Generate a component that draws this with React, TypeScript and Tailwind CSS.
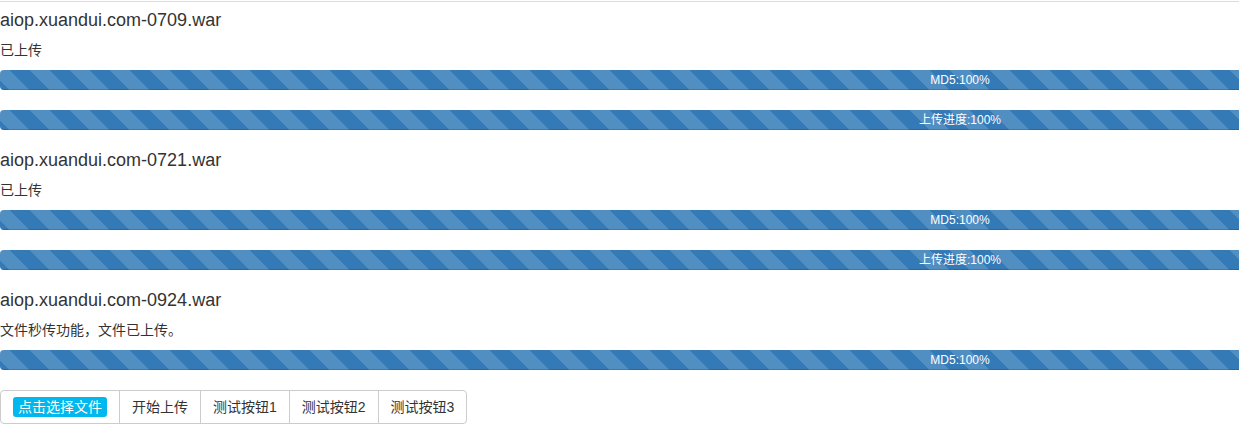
import React from 'react';

interface UploadItem {
  name: string;
  status: string;
  bars: string[];
}

const items: UploadItem[] = [
  { name: 'aiop.xuandui.com-0709.war', status: '已上传', bars: ['MD5:100%', '上传进度:100%'] },
  { name: 'aiop.xuandui.com-0721.war', status: '已上传', bars: ['MD5:100%', '上传进度:100%'] },
  { name: 'aiop.xuandui.com-0924.war', status: '文件秒传功能，文件已上传。', bars: ['MD5:100%'] },
];

const buttons = ['开始上传', '测试按钮1', '测试按钮2', '测试按钮3'];

// 条纹进度条（Bootstrap 3 风格）
const StripedBar: React.FC<{ label: string }> = ({ label }) => (
  <div className="mb-5 h-5 overflow-hidden rounded bg-[#f5f5f5]">
    <div className="h-5 w-full bg-[#337ab7] bg-[linear-gradient(45deg,rgba(255,255,255,.15)_25%,transparent_25%,transparent_50%,rgba(255,255,255,.15)_50%,rgba(255,255,255,.15)_75%,transparent_75%,transparent)] bg-[length:40px_40px] bg-[position:30px_0] text-center text-xs leading-5 text-white shadow-[inset_0_-1px_0_rgba(0,0,0,.15)]">
      {label}
    </div>
  </div>
);

export default function App() {
  return (
    <div
      className="h-[448px] w-full overflow-hidden bg-white text-[#333]"
      style={{ fontFamily: '"Liberation Sans", "Noto Sans CJK SC", sans-serif' }}
    >
      {/* 顶部分隔线 */}
      <div className="mt-px border-t border-[#ddd]" />

      <div className="w-[1920px] pt-2">
        {items.map((item) => (
          <div key={item.name}>
            <div className="mb-2.5 text-lg leading-5">{item.name}</div>
            <div className="mb-2.5 text-sm leading-5">{item.status}</div>
            {item.bars.map((b) => (
              <StripedBar key={b} label={b} />
            ))}
          </div>
        ))}

        {/* 按钮组 */}
        <div className="inline-flex rounded border border-[#ccc] bg-white text-sm leading-5">
          <div className="flex items-center px-3 py-1.5">
            <span className="rounded-[3px] bg-[#00b7ee] px-[5px] leading-5 text-white">点击选择文件</span>
          </div>
          {buttons.map((b) => (
            <div key={b} className="border-l border-[#ccc] px-3 py-1.5">
              {b}
            </div>
          ))}
        </div>
      </div>
    </div>
  );
}
